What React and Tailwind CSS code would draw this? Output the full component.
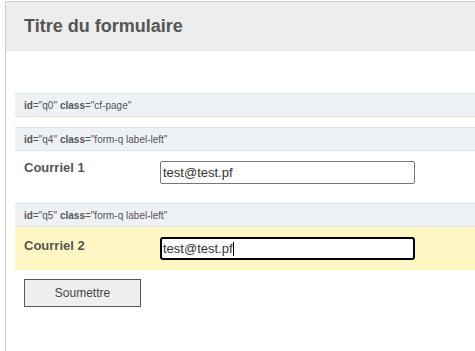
export default function App() {
  const font = { fontFamily: '"Liberation Sans", Arial, sans-serif' };

  return (
    <div className="w-[475px] h-[351px] overflow-hidden bg-white pt-px" style={font}>
      <div className="ml-[5px] w-[520px] h-full border-l border-t border-[#cfcfcf]">
        <div className="h-[49px] bg-[#ededed] px-[18px] flex items-center">
          <h1 className="text-[18px] font-bold text-[#555] leading-none -mt-[1px]">Titre du formulaire</h1>
        </div>

        <div className="pl-[9px] pt-[42px]">
          <div className="h-[24px] bg-[#eef2f5] border-y border-[#dde4ea] flex items-center px-[9px] text-[10px] text-[#555]">
            <span className="font-bold">id</span>="q0" <span className="font-bold ml-[3px]">class</span>="cf-page"
          </div>

          <div className="mt-[10px]">
            <div className="h-[24px] bg-[#eef2f5] border-y border-[#dde4ea] flex items-center px-[9px] text-[10px] text-[#555]">
              <span className="font-bold">id</span>="q4" <span className="font-bold ml-[3px]">class</span>="form-q label-left"
            </div>
            <div className="flex items-start px-[9px] py-[10px]">
              <label className="w-[136px] -mt-[1px] leading-[15px] text-[13px] font-bold text-[#555]">Courriel 1</label>
              <input
                readOnly
                value="test@test.pf"
                className="w-[255px] h-[23px] border border-[#767676] rounded-[2px] px-[2px] text-[13px] text-[#333] outline-none"
              />
            </div>
          </div>

          <div className="mt-[9px]">
            <div className="h-[24px] bg-[#eef2f5] border-y border-[#dde4ea] flex items-center px-[9px] text-[10px] text-[#555]">
              <span className="font-bold">id</span>="q5" <span className="font-bold ml-[3px]">class</span>="form-q label-left"
            </div>
            <div className="flex items-start px-[9px] py-[10px] bg-[#fff7c3]">
              <label className="w-[136px] mt-[1px] leading-[15px] text-[13px] font-bold text-[#555]">Courriel 2</label>
              <div className="w-[255px] h-[23px] border-2 border-black rounded-[3px] bg-white px-[1px] flex items-center text-[13px] text-[#333]">
                test@test.pf<span className="w-px h-[14px] bg-black" />
              </div>
            </div>
          </div>

          <button className="mt-[9px] ml-[9px] w-[117px] h-[28px] bg-[#efefef] border border-[#555] text-[12px] text-[#444]">
            Soumettre
          </button>
        </div>
      </div>
    </div>
  );
}
